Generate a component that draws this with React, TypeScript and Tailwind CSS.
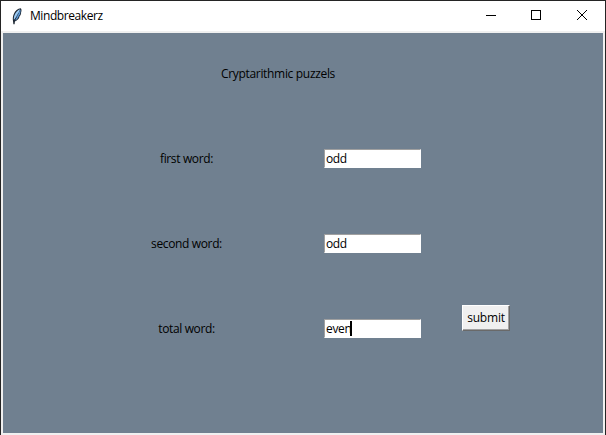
import React from "react";

const font = { fontFamily: '"Open Sans", "Noto Sans", sans-serif' };

function Feather() {
  return (
    <svg width="12" height="17" viewBox="0 0 12 17" className="shrink-0">
      <path d="M9.8 .3 C6.8 .6 4 3 2.8 6 C1.8 8.6 1.6 10.6 2 13 L2.4 16.3 L3.6 16.3 L3.9 13.6 C6.5 12.4 8.2 10.6 8.6 8.3 C9.6 7.3 10.2 5.9 10.1 4.3 C10.7 2.9 10.6 1.3 9.8 .3 Z" fill="#1c2530" />
      <path d="M9.2 1.2 C6.7 1.8 4.5 4.4 3.6 7.1 C2.9 9 2.7 10.4 2.9 12 L6.2 8 Z" fill="#9bcbf5" />
      <path d="M9.4 1.5 L4 12.5 C6.1 11.4 7.5 9.7 7.8 7.9 C8.8 6.9 9.4 5.7 9.3 4.4 C9.7 3.4 9.7 2.3 9.4 1.5 Z" fill="#5b99d8" />
      <path d="M7.2 5.4 L3 13.5" stroke="#1f3045" strokeWidth=".5" fill="none" />
    </svg>
  );
}

function Field({ label, value, caret = false }: { label: string; value: string; caret?: boolean }) {
  return (
    <div className="flex h-[19px] items-center">
      <div className="ml-[83px] w-[201px] text-center tracking-[-0.36px]">{label}</div>
      <div className="ml-[37px] flex h-[19px] w-[97px] items-center border border-b-white border-l-[#a0a0a0] border-r-white border-t-[#a0a0a0] bg-white pl-px tracking-[-0.35px]">
        <span>{value}</span>
        {caret && <span className="-ml-px h-[15px] w-[2px] bg-black" />}
      </div>
    </div>
  );
}

export default function App() {
  return (
    <div className="h-[435px] w-[606px] overflow-hidden bg-[#242424] pl-px pr-px pt-px text-[12px] leading-[16px] text-black" style={font}>
      <div className="flex h-[434px] w-[604px] flex-col bg-[#f0f0f0]">
        <header className="flex h-[30px] shrink-0 items-center bg-white pl-[10px]">
          <Feather />
          <span className="ml-[7px] tracking-[-0.42px]">Mindbreakerz</span>
          <div className="ml-auto flex">
            <svg width="138" height="30" viewBox="0 0 138 30" shapeRendering="crispEdges" fill="none" stroke="#000">
              <path d="M19 14.5h10" />
              <rect x="64.5" y="9.5" width="9" height="9" />
              <path d="M110 9l10 10M120 9l-10 10" strokeWidth="1" shapeRendering="geometricPrecision" />
            </svg>
          </div>
        </header>
        <main className="mx-[2px] mt-[2px] flex h-[400px] flex-col bg-[#708090]">
          <div className="ml-[175px] mt-[33px] w-[200px] text-center tracking-[-0.32px]">Cryptarithmic puzzels</div>
          <div className="mt-[67px] flex flex-col gap-[66px]">
            <Field label="first word:" value="odd" />
            <Field label="second word:" value="odd" />
            <div className="flex h-[19px] items-start">
              <Field label="total word:" value="even" caret />
              <button className="-mt-[14px] ml-[41px] flex h-[26px] w-[48px] items-center justify-center border border-b-[#696969] border-l-white border-r-[#696969] border-t-white bg-[#f0f0f0] tracking-[-0.2px] shadow-[inset_-1px_-1px_#a0a0a0]">submit</button>
            </div>
          </div>
        </main>
      </div>
    </div>
  );
}
